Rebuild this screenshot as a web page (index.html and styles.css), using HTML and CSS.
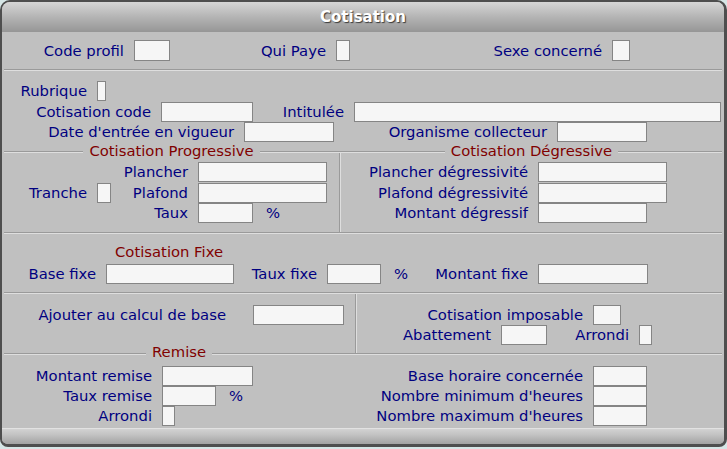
FILE: index.html
```html
<!DOCTYPE html>
<html lang="fr">
<head>
    <meta charset="UTF-8">
    <meta name="viewport" content="width=device-width, initial-scale=1.0">
    <title>Cotisation</title>
    <link rel="stylesheet" href="styles.css">
</head>
<body>

<div class="window">
    <div class="titlebar">Cotisation</div>

    <!-- Profil -->
    <div class="sec sec-top">
        <div class="row row-top">
            <span class="lbl">Code profil</span><span class="inp"></span>
            <span class="lbl">Qui Paye</span><span class="inp"></span>
            <span class="lbl">Sexe concerné</span><span class="inp"></span>
        </div>
    </div>

    <!-- Rubrique -->
    <div class="sec sec-b">
        <div class="row row-rub">
            <span class="lbl">Rubrique</span><span class="inp"></span>
        </div>
        <div class="row row-code">
            <span class="lbl">Cotisation code</span><span class="inp"></span>
            <span class="lbl">Intitulée</span><span class="inp"></span>
        </div>
        <div class="row row-date">
            <span class="lbl">Date d'entrée en vigueur</span><span class="inp"></span>
            <span class="lbl">Organisme collecteur</span><span class="inp"></span>
        </div>
    </div>

    <!-- Progressive / Dégressive -->
    <div class="sec sec-c">
        <div class="col col-left">
            <div class="legend">Cotisation Progressive</div>
            <div class="grid grid-prog">
                <span class="lbl c3">Plancher</span><span class="inp"></span>
                <span class="lbl">Tranche</span><span class="inp"></span>
                <span class="lbl">Plafond</span><span class="inp"></span>
                <span class="lbl c3">Taux</span>
                <span class="cell"><span class="inp w55"></span><span class="pct">%</span></span>
            </div>
        </div>
        <div class="vdiv"></div>
        <div class="col col-right">
            <div class="legend">Cotisation Dégressive</div>
            <div class="grid grid-degr">
                <span class="lbl">Plancher dégressivité</span><span class="inp"></span>
                <span class="lbl">Plafond dégressivité</span><span class="inp"></span>
                <span class="lbl">Montant dégressif</span><span class="inp w109"></span>
            </div>
        </div>
    </div>

    <!-- Fixe -->
    <div class="sec sec-d">
        <div class="caption">Cotisation Fixe</div>
        <div class="row row-fixe">
            <span class="lbl">Base fixe</span><span class="inp"></span>
            <span class="lbl">Taux fixe</span><span class="inp"></span>
            <span class="pct">%</span>
            <span class="lbl">Montant fixe</span><span class="inp"></span>
        </div>
    </div>

    <!-- Imposable -->
    <div class="sec sec-e">
        <div class="col col-ajout">
            <div class="row row-ajout">
                <span class="lbl">Ajouter au calcul de base</span><span class="inp"></span>
            </div>
        </div>
        <div class="vdiv"></div>
        <div class="col col-impos">
            <div class="row row-impos">
                <span class="lbl">Cotisation imposable</span><span class="inp"></span>
            </div>
            <div class="row row-abat">
                <span class="lbl">Abattement</span><span class="inp"></span>
                <span class="lbl">Arrondi</span><span class="inp"></span>
            </div>
        </div>
    </div>

    <!-- Remise -->
    <div class="sec sec-f">
        <div class="legend legend-remise">Remise</div>
        <div class="remise-body">
            <div class="grid grid-remise">
                <span class="lbl">Montant remise</span><span class="inp w91"></span>
                <span class="lbl">Taux remise</span>
                <span class="cell"><span class="inp w54"></span><span class="pct">%</span></span>
                <span class="lbl">Arrondi</span><span class="inp w13"></span>
            </div>
            <div class="grid grid-heures">
                <span class="lbl">Base horaire concernée</span><span class="inp"></span>
                <span class="lbl">Nombre minimum d'heures</span><span class="inp"></span>
                <span class="lbl">Nombre maximum d'heures</span><span class="inp"></span>
            </div>
        </div>
    </div>

    <div class="bottombar"></div>
</div>

</body>
</html>
```

FILE: styles.css
```css
body {
    margin: 0;
    background-color: #d6e6e6;
    font-family: "DejaVu Sans", Verdana, sans-serif;
    font-size: 14.8px;
}

.window {
    width: 727px;
    height: 447px;
    box-sizing: border-box;
    border: 2px solid #4e4e4e;
    border-right-width: 3px;
    border-bottom-width: 3px;
    border-radius: 10px 10px 8px 8px;
    background-color: #c0c0c0;
    overflow: hidden;
    display: flex;
    flex-direction: column;
}

.titlebar {
    height: 30px;
    line-height: 30px;
    text-align: center;
    font-weight: bold;
    font-size: 15px;
    color: white;
    text-shadow: 1px 1px 1px #3a3a3a;
    background: linear-gradient(#d6d6d6, #b4b4b4 50%, #969696);
}

/* sections */
.sec {
    margin: 0 2px;
    box-sizing: border-box;
}

.sec + .sec {
    border-top: 1px solid #9a9a9a;
    box-shadow: inset 0 1px 0 #dedede;
}

.sec-top {
    height: 37px;
    padding-top: 8px;
}

.sec-b {
    height: 82px;
    padding-top: 11px;
}

.sec-c {
    height: 81px;
    display: flex;
}

.sec-d {
    height: 60px;
    padding-top: 11px;
}

.sec-e {
    height: 61px;
    display: flex;
}

.sec-f {
    height: 75px;
}

.col-left {
    width: 335px;
}

.col-right {
    flex: 1;
}

.col-ajout {
    width: 351px;
    padding-top: 12px;
}

.col-impos {
    flex: 1;
    padding-top: 12px;
}

.vdiv {
    width: 2px;
    margin-top: 1px;
    background: linear-gradient(to right, #9a9a9a 50%, #dedede 50%);
}

/* titles */
.legend {
    width: fit-content;
    margin: -9px auto 0;
    padding: 0 6px;
    line-height: 16px;
    color: #800000;
    background-color: #c0c0c0;
}

.legend-remise {
    margin: -10px 0 0 142px;
}

.caption {
    margin-left: 111px;
    line-height: 16px;
    color: #800000;
}

/* rows */
.row, .grid {
    display: grid;
    align-items: center;
}

.lbl {
    text-align: right;
    padding-right: 10px;
    white-space: nowrap;
    color: #000080;
    line-height: 20px;
}

.pct {
    color: #000080;
    line-height: 20px;
}

.inp {
    display: block;
    height: 20px;
    box-sizing: border-box;
    background-color: #f6f6f6;
    border: 1px solid #858585;
}

.cell {
    display: flex;
    align-items: center;
}

.cell .pct {
    margin-left: 13px;
}

.w13 { width: 13px; }
.w54 { width: 54px; }
.w55 { width: 55px; }
.w91 { width: 91px; }
.w109 { width: 109px; }

.row-top {
    grid-template-columns: 130px 36px 166px 14px 262px 18px;
    grid-template-rows: 21px;
}

.row-top .inp {
    height: 21px;
}

.row-rub {
    grid-template-columns: 93px 9px;
    grid-template-rows: 20px;
}

.row-code {
    grid-template-columns: 157px 92px 101px 367px;
    grid-template-rows: 21px;
}

.row-date {
    grid-template-columns: 240px 90px 223px 90px;
    grid-template-rows: 20px;
}

.grid-prog {
    margin-top: 3px;
    grid-template-columns: 93px 14px 87px 129px;
    grid-template-rows: 20px 21px 20px;
}

.c3 {
    grid-column: 3;
}

.grid-degr {
    margin-top: 3px;
    grid-template-columns: 197px 129px;
    grid-template-rows: 20px 21px 20px;
}

.row-fixe {
    margin-top: 4px;
    grid-template-columns: 102px 128px 93px 54px 27px 130px 110px;
    grid-template-rows: 20px;
}

.row-fixe .pct {
    padding-left: 13px;
}

.row-ajout {
    grid-template-columns: 249px 91px;
    grid-template-rows: 20px;
}

.row-ajout .lbl {
    padding-right: 27px;
}

.row-impos {
    grid-template-columns: 236px 28px;
    grid-template-rows: 20px;
}

.row-abat {
    grid-template-columns: 144px 46px 92px 13px;
    grid-template-rows: 20px;
}

.remise-body {
    display: flex;
    margin-top: 6px;
}

.grid-remise {
    width: 351px;
    grid-template-columns: 158px auto;
    grid-template-rows: 20px 20px 20px;
    justify-items: start;
}

.grid-remise .lbl {
    justify-self: stretch;
}

.grid-heures {
    grid-template-columns: 238px 54px;
    grid-template-rows: 20px 20px 20px;
}

.bottombar {
    margin-top: auto;
    height: 16px;
    box-sizing: border-box;
    border-top: 1px solid #e2e2e2;
    background: linear-gradient(#d2d2d2, #c2c2c2 40%, #a2a2a2);
}
```
